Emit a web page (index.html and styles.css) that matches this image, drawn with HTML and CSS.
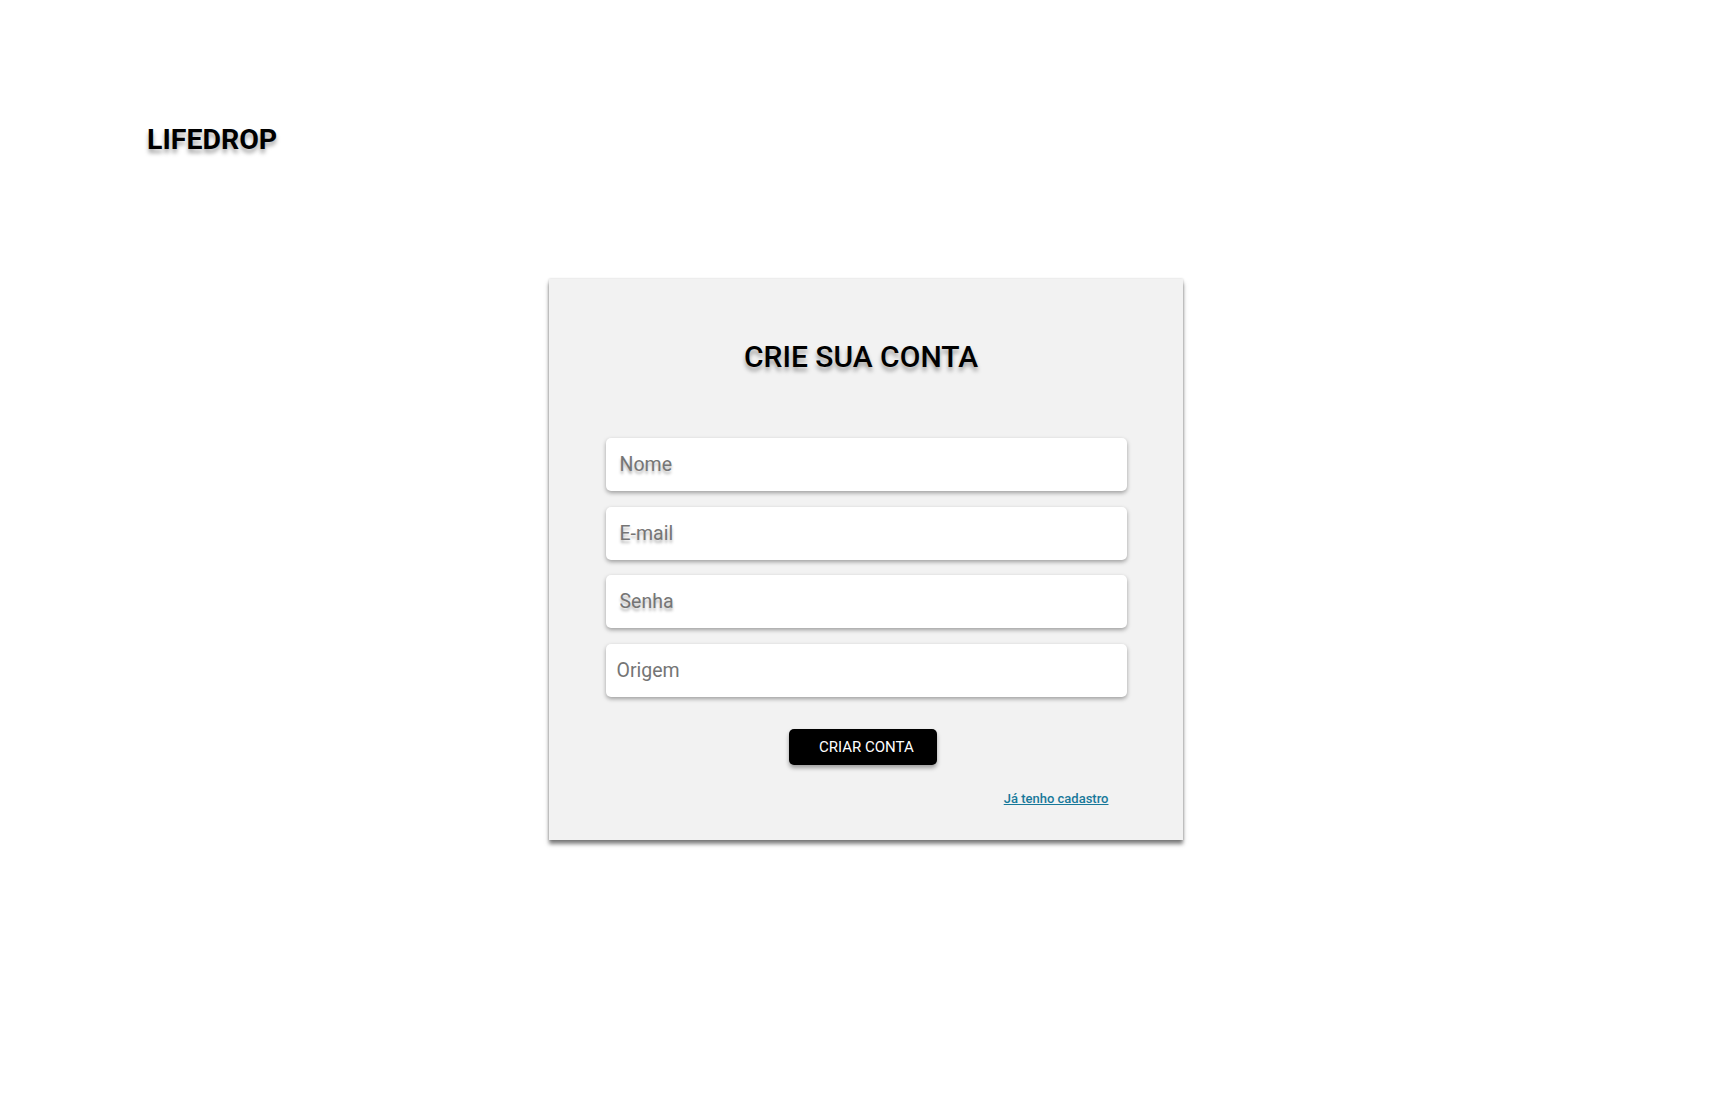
FILE: index.html
```html
<!DOCTYPE html>
<html lang="pt-BR">
<head>
<meta charset="utf-8">
<title>LifeDrop - Crie sua conta</title>
<link rel="stylesheet" href="styles.css">
</head>
<body>
<header class="header">
  <h1 class="logo">LIFEDROP</h1>
</header>
<main class="main">
  <form class="card">
    <h2 class="card-title">CRIE SUA CONTA</h2>
    <div class="fields">
      <div class="field"><span class="field-label shadowed">Nome</span></div>
      <div class="field"><span class="field-label shadowed">E-mail</span></div>
      <div class="field"><span class="field-label shadowed">Senha</span></div>
      <div class="field field-plain"><span class="field-label">Origem</span></div>
    </div>
    <div class="actions">
      <button type="button" class="btn">CRIAR CONTA</button>
    </div>
    <div class="link-row">
      <a href="#" class="link">Já tenho cadastro</a>
    </div>
  </form>
</main>
</body>
</html>
```
FILE: styles.css
```css
* { box-sizing: border-box; }
html, body { margin: 0; padding: 0; background: #ffffff; }
body { font-family: Roboto, "Liberation Sans", Arial, sans-serif; color: #000; }

.header { padding: 123px 0 0 147px; }
.logo {
  margin: 0;
  font-size: 28.5px;
  line-height: 33px;
  font-weight: 700;
  color: #000;
  text-shadow: 0 4px 4px rgba(0, 0, 0, 0.35);
}

.main {
  display: flex;
  justify-content: center;
  align-items: flex-start;
  padding: 123px 0 60px 3px;
}

.card {
  width: 634px;
  height: 561px;
  background: #f2f2f2;
  box-shadow: 0 4px 4px rgba(0, 0, 0, 0.5), 0 0 2px rgba(0, 0, 0, 0.2);
  padding: 60px 56px 0 57px;
  display: flex;
  flex-direction: column;
}

.card-title {
  margin: 0 10px 0 0;
  text-align: center;
  font-size: 30px;
  line-height: 35px;
  font-weight: 500;
  color: #000;
  text-shadow: 0 4px 4px rgba(0, 0, 0, 0.35);
}

.fields { margin-top: 64px; display: flex; flex-direction: column; gap: 15.5px; }

.field {
  height: 53px;
  background: #fff;
  border-radius: 5px;
  box-shadow: 0 2px 4px rgba(0, 0, 0, 0.35);
  display: flex;
  align-items: center;
  padding-left: 14px;
}
.field-plain { padding-left: 11px; }

.field-label {
  font-size: 19.5px;
  font-weight: 400;
  color: #757575;
}
.shadowed { text-shadow: 0 3px 3px rgba(0, 0, 0, 0.3); }

.actions { margin-top: 32px; display: flex; justify-content: center; padding-right: 6px; }
.btn {
  height: 36px;
  width: 148px;
  background: #000;
  color: #fff;
  border: none;
  border-radius: 5px;
  font-family: inherit;
  font-size: 15px;
  font-weight: 400;
  padding: 0 0 0 30px;
  text-align: left;
  white-space: nowrap;
  box-shadow: 0 3px 4px rgba(0, 0, 0, 0.35);
  cursor: pointer;
}

.link-row { margin-top: 23px; text-align: right; padding-right: 18px; }
.link {
  font-size: 13px;
  line-height: 15px;
  font-weight: 500;
  color: #18799a;
  text-decoration: underline;
}
```
